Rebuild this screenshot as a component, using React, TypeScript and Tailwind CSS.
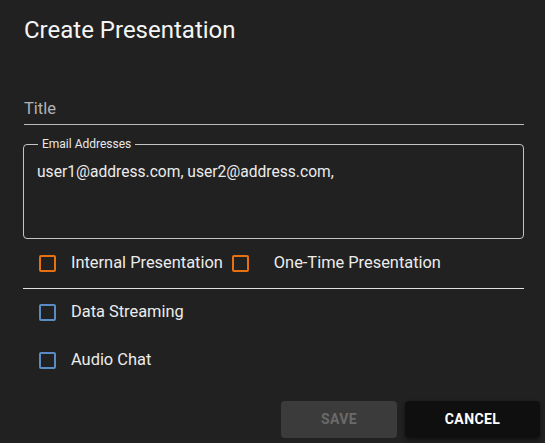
import React from "react";

function Box({ color }: { color: "orange" | "blue" }) {
  return (
    <span
      className={`inline-block shrink-0 w-[17px] h-[17px] rounded-[2px] border-2 ${
        color === "orange" ? "border-[#e8700f]" : "border-[#5a8cc4]"
      }`}
    />
  );
}

function Check({ label, color }: { label: string; color: "orange" | "blue" }) {
  return (
    <label className="flex items-center h-[26px] cursor-pointer">
      <span className="ml-[15px] mr-[15px] flex">
        <Box color={color} />
      </span>
      <span className="text-[16.4px] text-[#ececec]">{label}</span>
    </label>
  );
}

export default function App() {
  return (
    <div
      className="w-[545px] h-[443px] bg-[#212121] text-white overflow-hidden"
      style={{ fontFamily: "Roboto, 'Noto Sans', sans-serif" }}
    >
      <div className="pl-6 pr-[21px] pt-[14px]">
        <h2 className="text-[24px] leading-[32px] font-normal text-[#f5f5f5]">Create Presentation</h2>

        {/* Title */}
        <div className="mt-[46px] h-[33px] border-b border-[#bdbdbd] flex items-end pb-[5px]">
          <span className="text-[16.5px] leading-[20px] text-[#b3b3b3]">Title</span>
        </div>

        {/* Emails */}
        <fieldset className="mt-[12px] border border-[#c4c4c4] rounded-[4px] h-[102px] pl-[13px] pr-[12px] -ml-px">
          <legend className="text-[12px] leading-[14px] px-[4px] ml-[1px] text-[#e8e8e8]">Email Addresses</legend>
          <div className="text-[15.6px] leading-[22px] text-[#ececec] mt-[10px]">
            user1@address.com, user2@address.com,
          </div>
        </fieldset>

        {/* Checkboxes */}
        <div className="flex items-center mt-[11px]">
          <label className="flex items-center h-[26px] cursor-pointer">
            <span className="ml-[15px] mr-[15px] flex">
              <Box color="orange" />
            </span>
            <span className="text-[16.4px] text-[#ececec]">Internal Presentation</span>
          </label>
          <label className="flex items-center h-[26px] cursor-pointer">
            <span className="ml-[9px] mr-[25px] flex">
              <Box color="orange" />
            </span>
            <span className="text-[16.4px] text-[#ececec]">One-Time Presentation</span>
          </label>
        </div>
        <div className="mt-[12px] border-t border-[#e0e0e0] -ml-px" />
        <div className="mt-[10px]">
          <Check label="Data Streaming" color="blue" />
        </div>
        <div className="mt-[22px]">
          <Check label="Audio Chat" color="blue" />
        </div>
      </div>

      {/* Actions */}
      <div className="flex justify-end gap-[8px] pr-[5px] mt-[28px]">
        <button className="w-[116px] h-[37px] rounded-[4px] bg-[#3b3b3b] text-[#6a6a6a] text-[14px] font-bold tracking-[0.4px]">
          SAVE
        </button>
        <button className="w-[135px] h-[37px] rounded-[4px] bg-[#0f0f0f] text-white text-[14px] font-bold tracking-[0.4px] shadow-[0_2px_4px_rgba(0,0,0,0.5)]">
          CANCEL
        </button>
      </div>
    </div>
  );
}
